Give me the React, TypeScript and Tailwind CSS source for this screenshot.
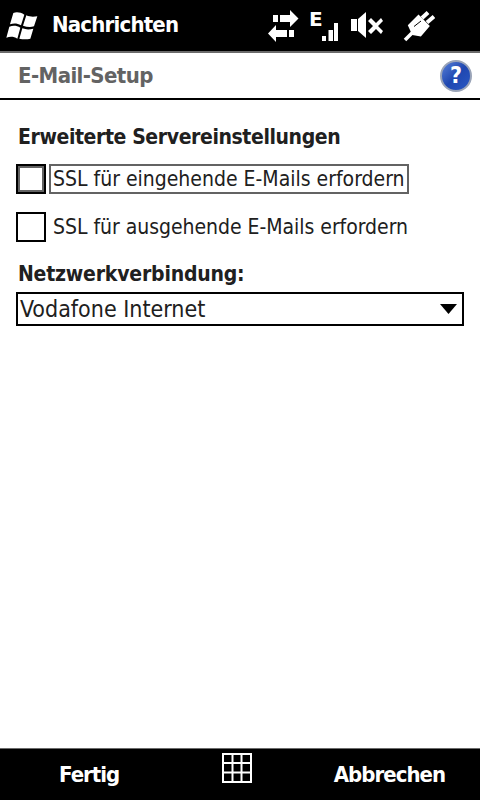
export default function App() {
  const font = "[font-family:'DejaVu_Sans_Condensed','DejaVu_Sans',sans-serif]";
  return (
    <div className={`w-[480px] h-[800px] flex flex-col bg-white overflow-hidden ${font}`}>
      <header className="h-[53px] shrink-0 bg-black border-b-2 border-[#6b6b6b] flex items-start text-white">
        <svg className="mt-[5px] w-[50px] h-[42px] shrink-0" viewBox="0 0 150 126" fill="white">
          <path d="M40 24C50 20 62 22 73 29L63 61C52 55 42 54 30 58Z" />
          <path d="M79 31C90 36 100 36 112 34L102 64C92 67 80 66 69 62Z" />
          <path d="M28 65C40 61 50 62 61 68L52 101C42 95 32 94 19 98Z" />
          <path d="M67 70C78 74 88 74 100 71L91 101C80 104 68 103 58 101Z" />
        </svg>
        <span className="ml-[2px] mt-[14px] text-[22px] tracking-[-0.8px] font-bold leading-none">Nachrichten</span>
        <svg className="ml-auto mt-[10px] w-[31px] h-[32px] shrink-0" viewBox="0 0 31 32" fill="white">
          <path d="M5 5h5v7H5zM12 5h10V0l8.5 8.5L22 17v-5H12z" />
          <path d="M26 20h-5v7h5zM19 20H8v-5L0 23.5 8 32v-5h11z" />
        </svg>
        <span className="ml-[10px] mt-[9px] w-[13px] text-[20px] font-bold leading-none [font-family:'DejaVu_Sans',sans-serif]">E</span>
        <svg className="mt-[23px] w-[16px] h-[18px] shrink-0" viewBox="0 0 16 18" fill="white">
          <rect x="0" y="13" width="4" height="5" />
          <rect x="6.5" y="7" width="4.5" height="11" />
          <rect x="12" y="0" width="4" height="18" />
        </svg>
        <svg className="ml-[13px] mt-[12px] w-[32px] h-[26px] shrink-0" viewBox="0 0 32 26" fill="white">
          <rect x="0" y="7" width="6" height="12" />
          <path d="M7 7L15 0V26L7 19Z" />
          <path d="M17 9l3-3 5 5 5-5 2 3-5 5 5 5-2 3-5-5-5 5-3-3 5-5z" />
        </svg>
        <svg className="ml-[17px] mt-[8px] mr-[45px] w-[35px] h-[36px] shrink-0" viewBox="0 0 35 36" fill="none" stroke="white">
          <path d="M5 32L14 23" strokeWidth="3.5" />
          <path d="M9 17.5L18.5 8L28.5 18L20.5 27.5L13 26Z" fill="white" strokeWidth="2" />
          <path d="M22 10L28 4.5M27 14.5L34 8.5" strokeWidth="4" />
          <path d="M14 18.5L21 13" stroke="black" strokeWidth="1" />
        </svg>
      </header>
      <div className="h-[47px] shrink-0 border-b-2 border-black flex items-center justify-between pl-[18px] pr-[8px]">
        <span className="text-[22px] tracking-[-0.6px] font-bold text-[#636363] leading-none">E-Mail-Setup</span>
        <div className="w-[32px] h-[32px] rounded-full border-2 border-[#9aa4b8] bg-gradient-to-br from-[#5a80d8] via-[#1f47b0] to-[#2a58c4] flex items-center justify-center text-white text-[23px] font-bold leading-none">?</div>
      </div>
      <main className="flex-1 flex flex-col pl-[16px] pr-[16px] pt-[24px]">
        <div className="text-[21px] tracking-[-0.4px] font-bold text-[#202020] leading-[26px] pl-[2px]">Erweiterte Servereinstellungen</div>
        <div className="mt-[14px] flex items-center gap-[3px] h-[30px]">
          <div className="w-[30px] h-[30px] border-2 border-black bg-white"><div className="w-full h-full border-2 border-[#636363]" /></div>
          <div className="h-[30px] border-2 border-[#636363] pl-[2px] pr-[2px] flex items-center text-[21px] text-[#202020] leading-none">SSL für eingehende E-Mails erfordern</div>
        </div>
        <div className="mt-[18px] flex items-center gap-[7px] h-[30px]">
          <div className="w-[30px] h-[30px] border-2 border-black bg-white" />
          <div className="text-[21px] tracking-[-0.03px] text-[#202020] leading-none">SSL für ausgehende E-Mails erfordern</div>
        </div>
        <div className="mt-[19px] text-[21px] tracking-[-0.2px] font-bold text-[#202020] leading-[26px] pl-[2px]">Netzwerkverbindung:</div>
        <div className="mt-[5px] h-[34px] w-[448px] border-2 border-black flex items-center pl-[2px] pr-[5px] text-[23px] text-[#202020] leading-none">
          <span>Vodafone Internet</span>
          <svg className="ml-auto w-[17px] h-[10px]" viewBox="0 0 17 10" fill="black"><path d="M0 0h17L8.5 10z" /></svg>
        </div>
      </main>
      <footer className="h-[52px] shrink-0 bg-black border-t border-[#6b6b6b] flex items-center text-white text-[22px] font-bold tracking-[-1px] leading-none">
        <span className="ml-[59px]">Fertig</span>
        <svg className="ml-[103px] mb-[14px] w-[30px] h-[30px] shrink-0" viewBox="0 0 30 30" fill="none" stroke="white" strokeWidth="2">
          <rect x="1" y="1" width="28" height="28" />
          <path d="M1 10H29M1 19.5H29M10.5 1V29M19.5 1V29" />
        </svg>
        <span className="ml-auto mr-[35px]">Abbrechen</span>
      </footer>
    </div>
  );
}
